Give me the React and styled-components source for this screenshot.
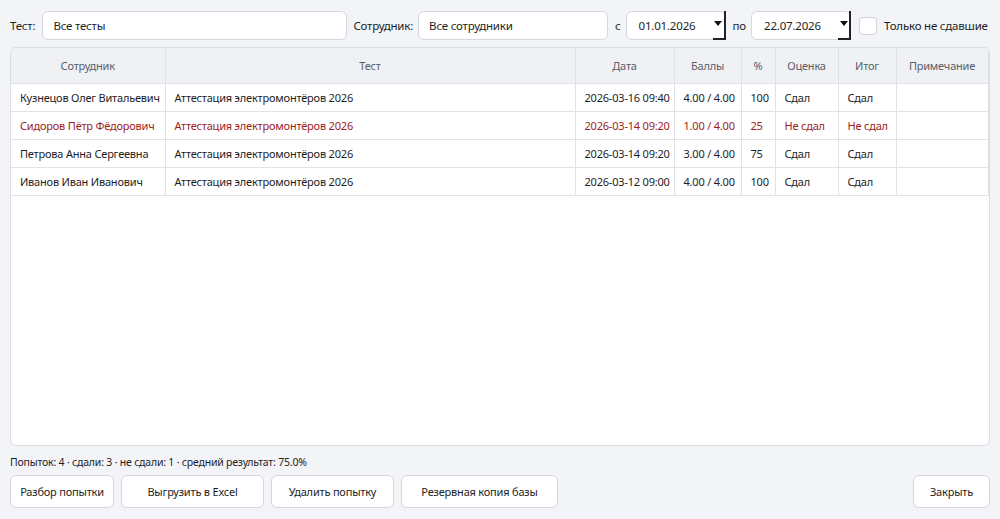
import React from 'react';
import styled, { createGlobalStyle } from 'styled-components';

const Global = createGlobalStyle`
  html, body { margin: 0; padding: 0; background: #f3f4f8; }
  body {
    font-family: "Noto Sans", "Open Sans", sans-serif;
    font-size: 11px;
    letter-spacing: -0.2px;
    color: #1e1e1e;
  }
`;

const Window = styled.div`
  width: 1000px;
  height: 519px;
  box-sizing: border-box;
  padding: 11px 10px 11px 10px;
  display: flex;
  flex-direction: column;
`;

const FilterBar = styled.div`
  display: flex;
  align-items: center;
  height: 29px;
  font-size: 11.5px;
`;

const Label = styled.span`
  white-space: nowrap;
  margin: 0 ${p => p.$mr ?? 6}px 0 ${p => p.$ml ?? 6}px;
`;

const Input = styled.div`
  box-sizing: border-box;
  width: ${p => p.$w}px;
  height: 29px;
  background: #fff;
  border: 1px solid #d5d8de;
  border-radius: 6px;
  padding: 0 10px;
  display: flex;
  align-items: center;
  flex-shrink: 0;
`;

const DateBox = styled(Input)`
  padding-right: 0;
  padding-left: 12px;
  justify-content: space-between;
`;

const Arrow = styled.div`
  width: 13px;
  height: 29px;
  margin-top: -1px;
  margin-right: -1px;
  box-sizing: border-box;
  border-right: 2px solid #222;
  border-bottom: 2px solid #222;
  display: flex;
  align-items: center;
  justify-content: center;
  &::after {
    content: '';
    border-left: 4px solid transparent;
    border-right: 4px solid transparent;
    border-top: 5px solid #111;
    margin-top: -2px;
  }
`;

const Check = styled.div`
  width: 18px;
  height: 18px;
  box-sizing: border-box;
  border: 1px solid #cfd3d9;
  border-radius: 4px;
  background: #fff;
  margin-left: 8px;
  flex-shrink: 0;
`;

const TableWrap = styled.div`
  margin-top: 7px;
  flex: 1;
  background: #fff;
  border: 1px solid #dadde2;
  border-radius: 6px;
  overflow: hidden;
`;

const Table = styled.table`
  border-collapse: collapse;
  width: 977px;
  table-layout: fixed;
`;

const Th = styled.th`
  height: 35px;
  background: #eff1f5;
  color: #5a5f67;
  font-weight: 400;
  border-right: 1px solid #dfe2e6;
  border-bottom: 1px solid #dfe2e6;
  text-align: center;
  padding: 0;
`;

const Td = styled.td`
  height: 27px;
  padding: 0 0 0 9px;
  border-right: 1px solid #dfe2e6;
  border-bottom: 1px solid #dfe2e6;
  color: ${p => (p.$bad ? '#9e1d1d' : '#1e1e1e')};
  white-space: nowrap;
  overflow: hidden;
`;

const Summary = styled.div`
  margin-top: 8px;
  height: 16px;
  line-height: 16px;
  font-size: 10.5px;
`;

const Buttons = styled.div`
  margin-top: 5px;
  display: flex;
  gap: 7px;
`;

const Button = styled.button`
  box-sizing: border-box;
  width: ${p => p.$w}px;
  height: 33px;
  padding: 0;
  background: #fff;
  border: 1px solid #d3d6dc;
  border-radius: 6px;
  font-family: inherit;
  font-size: 11px;
  letter-spacing: -0.2px;
  color: #1e1e1e;
  margin-left: ${p => (p.$right ? 'auto' : '0')};
`;

const cols = [154, 410, 99, 67, 34, 63, 58, 92];
const heads = ['Сотрудник', 'Тест', 'Дата', 'Баллы', '%', 'Оценка', 'Итог', 'Примечание'];

const rows = [
  ['Кузнецов Олег Витальевич', 'Аттестация электромонтёров 2026', '2026-03-16 09:40', '4.00 / 4.00', '100', 'Сдал', 'Сдал', ''],
  ['Сидоров Пётр Фёдорович', 'Аттестация электромонтёров 2026', '2026-03-14 09:20', '1.00 / 4.00', '25', 'Не сдал', 'Не сдал', '', true],
  ['Петрова Анна Сергеевна', 'Аттестация электромонтёров 2026', '2026-03-14 09:20', '3.00 / 4.00', '75', 'Сдал', 'Сдал', ''],
  ['Иванов Иван Иванович', 'Аттестация электромонтёров 2026', '2026-03-12 09:00', '4.00 / 4.00', '100', 'Сдал', 'Сдал', ''],
];

export default function App() {
  return (
    <Window>
      <Global />
      <FilterBar>
        <Label $ml={0} $mr={7}>Тест:</Label>
        <Input $w={305}>Все тесты</Input>
        <Label $ml={6} $mr={5}>Сотрудник:</Label>
        <Input $w={190}>Все сотрудники</Input>
        <Label $ml={7} $mr={5}>с</Label>
        <DateBox $w={100}>01.01.2026<Arrow /></DateBox>
        <Label $ml={7} $mr={5}>по</Label>
        <DateBox $w={100}>22.07.2026<Arrow /></DateBox>
        <Check />
        <Label $ml={7} $mr={0}>Только не сдавшие</Label>
      </FilterBar>
      <TableWrap>
        <Table>
          <colgroup>
            {cols.map((w, i) => <col key={i} style={{ width: w }} />)}
          </colgroup>
          <thead>
            <tr>{heads.map(h => <Th key={h}>{h}</Th>)}</tr>
          </thead>
          <tbody>
            {rows.map((r, i) => (
              <tr key={i}>
                {r.slice(0, 8).map((c, j) => <Td key={j} $bad={r[8]}>{c}</Td>)}
              </tr>
            ))}
          </tbody>
        </Table>
      </TableWrap>
      <Summary>Попыток: 4 · сдали: 3 · не сдали: 1 · средний результат: 75.0%</Summary>
      <Buttons>
        <Button $w={104}>Разбор попытки</Button>
        <Button $w={143}>Выгрузить в Excel</Button>
        <Button $w={123}>Удалить попытку</Button>
        <Button $w={157}>Резервная копия базы</Button>
        <Button $right $w={77}>Закрыть</Button>
      </Buttons>
    </Window>
  );
}
